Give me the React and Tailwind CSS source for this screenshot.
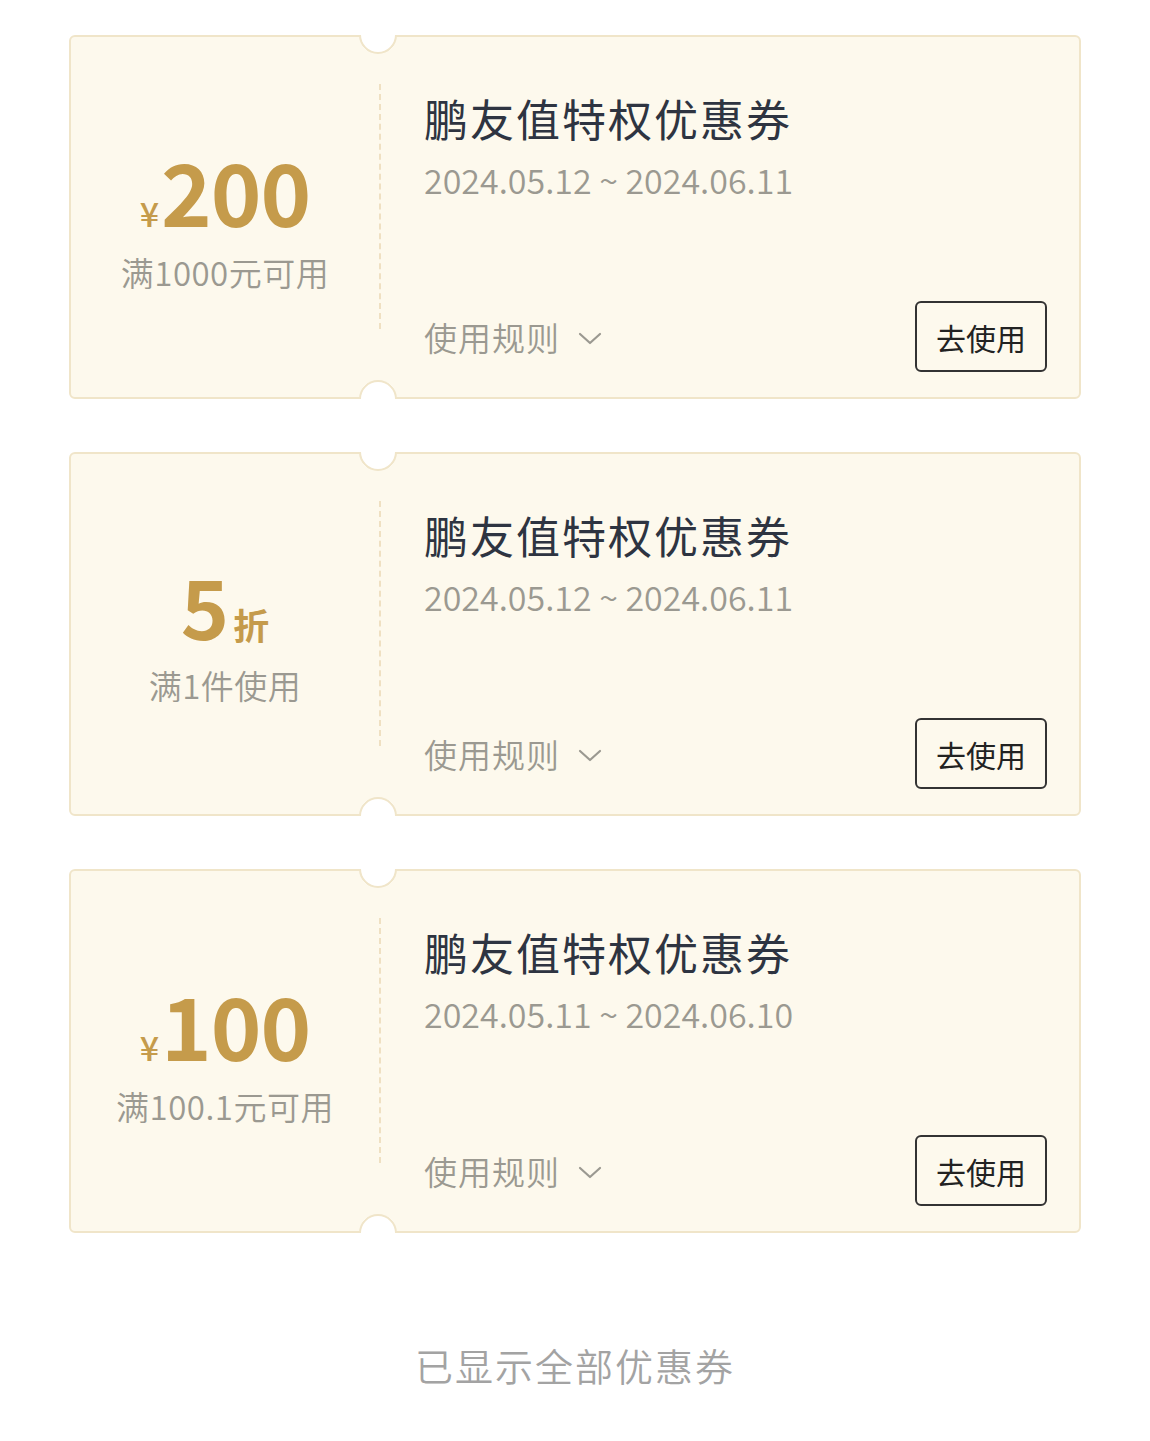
import React from "react";

const FONT = { fontFamily: '"Noto Sans CJK SC", "Noto Sans", sans-serif' };

const coupons = [
  { kind: "cash", value: "200", cond: "满1000元可用", date: "2024.05.12 ~ 2024.06.11" },
  { kind: "discount", value: "5", cond: "满1件使用", date: "2024.05.12 ~ 2024.06.11" },
  { kind: "cash", value: "100", cond: "满100.1元可用", date: "2024.05.11 ~ 2024.06.10" },
];

function Chevron() {
  return (
    <svg width="24" height="24" viewBox="0 0 24 24" fill="none" stroke="#9b9991" strokeWidth="2.2" strokeLinecap="round" strokeLinejoin="round">
      <path d="M2 8l10 9 10-9" />
    </svg>
  );
}

function Coupon({ c }) {
  return (
    <div className="relative flex h-[364px] rounded-[6px] border-2 border-[#f0e5c9] bg-[#fdf9ed]">
      {/* notches */}
      <div className="absolute left-[288px] top-[-21px] h-[38px] w-[38px] rotate-45 rounded-full border-2 border-[#f0e5c9] border-l-transparent border-t-transparent bg-white" />
      <div className="absolute bottom-[-21px] left-[288px] h-[38px] w-[38px] rotate-45 rounded-full border-2 border-[#f0e5c9] border-b-transparent border-r-transparent bg-white" />

      <div className="flex w-[308px] flex-col items-center pt-[110px]">
        {c.kind === "cash" ? (
          <div className="flex items-baseline text-[#c59b4b]">
            <span className="mr-[2px] text-[34px] font-medium leading-none">¥</span>
            <span className="text-[86px] font-bold leading-none tracking-[-1px]">{c.value}</span>
          </div>
        ) : (
          <div className="flex items-baseline text-[#c59b4b]">
            <span className="text-[82px] font-bold leading-none">{c.value}</span>
            <span className="ml-[4px] text-[36px] font-bold leading-none">折</span>
          </div>
        )}
        <div className="mt-[23px] text-[33px] font-[350] leading-none tracking-[0.5px] text-[#9b9991]">{c.cond}</div>
      </div>

      <div className="mt-[47px] mb-[68px] w-0 border-l-2 border-dashed border-[#efe0c2]" />

      <div className="flex flex-1 flex-col pl-[43px] pr-[32px] pt-[59px] pb-[25px]">
        <div className="text-[44px] leading-none tracking-[2px] text-[#2e3441]">鹏友值特权优惠券</div>
        <div className="mt-[23px] text-[34px] font-[350] leading-none text-[#9b9991]">{c.date}</div>
        <div className="mt-auto flex items-end justify-between">
          <div className="mb-[18px] flex items-center gap-[18px] text-[33px] font-[350] leading-none text-[#9b9991]">
            <span className="tracking-[1px]">使用规则</span>
            <Chevron />
          </div>
          <button className="flex h-[71px] w-[132px] items-center justify-center rounded-[6px] border-2 border-[#333333] text-[30px] leading-none text-[#222222]">
            去使用
          </button>
        </div>
      </div>
    </div>
  );
}

export default function App() {
  return (
    <div className="min-h-[1441px] bg-white px-[69px] pt-[35px]" style={FONT}>
      <div className="flex flex-col gap-[53px]">
        {coupons.map((c, i) => (
          <Coupon key={i} c={c} />
        ))}
      </div>
      <div className="mt-[113px] text-center text-[38px] font-[350] leading-none tracking-[2px] text-[#a3a3a3]">已显示全部优惠券</div>
    </div>
  );
}
